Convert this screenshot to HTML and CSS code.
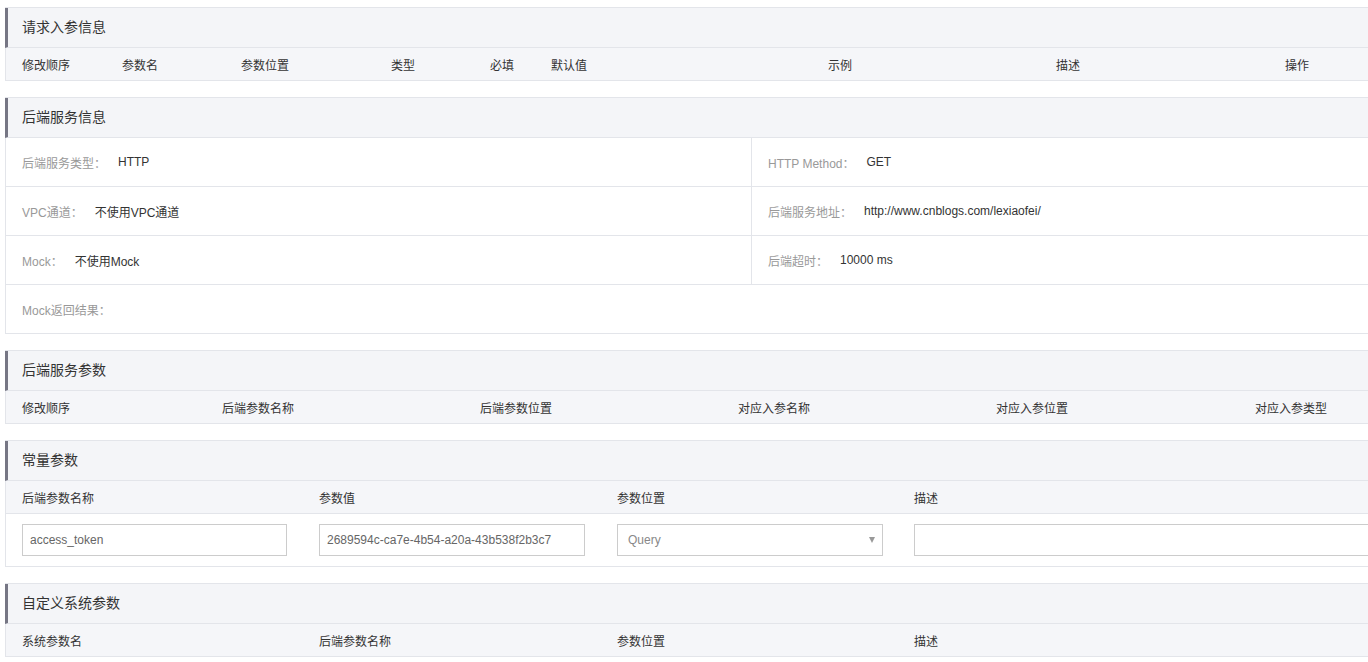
FILE: index.html
```html
<!DOCTYPE html>
<html lang="zh-CN">
<head>
<meta charset="utf-8">
<title>API 详情</title>
<link rel="stylesheet" href="styles.css">
</head>
<body>
<div class="page">
  <section class="panel">
    <div class="panel-head">请求入参信息</div>
    <div class="cols cols-req">
      <span>修改顺序</span><span>参数名</span><span>参数位置</span><span>类型</span><span>必填</span><span>默认值</span><span>示例</span><span>描述</span><span>操作</span>
    </div>
  </section>

  <section class="panel">
    <div class="panel-head">后端服务信息</div>
    <div class="info">
      <div class="info-cell"><span class="label">后端服务类型：</span><span class="value">HTTP</span></div>
      <div class="info-cell"><span class="label">HTTP Method：</span><span class="value">GET</span></div>
      <div class="info-cell"><span class="label">VPC通道：</span><span class="value">不使用VPC通道</span></div>
      <div class="info-cell"><span class="label">后端服务地址：</span><span class="value">http://www.cnblogs.com/lexiaofei/</span></div>
      <div class="info-cell"><span class="label">Mock：</span><span class="value">不使用Mock</span></div>
      <div class="info-cell"><span class="label">后端超时：</span><span class="value">10000 ms</span></div>
      <div class="info-cell wide"><span class="label">Mock返回结果：</span></div>
    </div>
  </section>

  <section class="panel">
    <div class="panel-head">后端服务参数</div>
    <div class="cols cols-back">
      <span>修改顺序</span><span>后端参数名称</span><span>后端参数位置</span><span>对应入参名称</span><span>对应入参位置</span><span>对应入参类型</span>
    </div>
  </section>

  <section class="panel">
    <div class="panel-head">常量参数</div>
    <div class="cols cols-four">
      <span>后端参数名称</span><span>参数值</span><span>参数位置</span><span>描述</span><span></span>
    </div>
    <div class="form-row cols-four">
      <div class="fcell"><input class="field" type="text" value="access_token"></div>
      <div class="fcell"><input class="field" type="text" value="2689594c-ca7e-4b54-a20a-43b538f2b3c7"></div>
      <div class="fcell">
        <div class="select"><span class="select-text">Query</span><span class="caret"></span></div>
      </div>
      <div class="fcell wide-input"><input class="field" type="text" value=""></div>
    </div>
  </section>

  <section class="panel">
    <div class="panel-head">自定义系统参数</div>
    <div class="cols cols-four">
      <span>系统参数名</span><span>后端参数名称</span><span>参数位置</span><span>描述</span><span></span>
    </div>
  </section>
</div>
</body>
</html>
```

FILE: styles.css
```css
html, body {
  margin: 0;
  padding: 0;
  overflow: hidden;
  background: #ffffff;
}

body {
  font-family: "Liberation Sans", "Noto Sans CJK SC", sans-serif;
  font-size: 12px;
  color: #333333;
}

.page {
  padding: 7px 0 0 5px;
  width: 1492px;
}

.panel {
  width: 1490px;
  border: 1px solid #e3e5ea;
  margin-bottom: 16px;
  background: #ffffff;
}

.panel-head {
  height: 39px;
  line-height: 39px;
  margin-left: -1px;
  border-left: 3px solid #767684;
  border-bottom: 1px solid #e3e5ea;
  padding-left: 14px;
  background: #f4f5f8;
  font-size: 14px;
  color: #333333;
}

.cols {
  display: grid;
  height: 32px;
  align-items: center;
  background: #f5f6f9;
  color: #333333;
}

.cols > span {
  padding-left: 16px;
  white-space: nowrap;
}

.cols-req {
  grid-template-columns: 100px 119px 150px 99px 61px 277px 228px 229px 1fr;
}

.cols-back {
  grid-template-columns: 200px 258px 258px 258px 259px 1fr;
}

.cols-four {
  grid-template-columns: 297px 298px 297px 298px 1fr;
}

.form-row {
  display: grid;
  border-top: 1px solid #e3e5ea;
  padding: 10px 0;
  background: #ffffff;
}

.fcell {
  padding: 0 16px;
}

.fcell-select {
  padding-right: 15px;
}

.wide-input {
  grid-column: 4 / 6;
  padding-right: 0;
}

.field {
  box-sizing: border-box;
  display: block;
  width: 100%;
  height: 32px;
  margin: 0;
  padding: 0 7px;
  border: 1px solid #cccccc;
  border-radius: 0;
  font-family: "Liberation Sans", "Noto Sans CJK SC", sans-serif;
  font-size: 12px;
  color: #666666;
  background: #ffffff;
  outline: none;
}

.select {
  box-sizing: border-box;
  height: 32px;
  border: 1px solid #cccccc;
  display: flex;
  align-items: center;
  justify-content: space-between;
  padding: 0 7px 0 10px;
  margin-right: -1px;
  background: #ffffff;
}

.select-text {
  color: #888888;
}

.caret {
  width: 0;
  height: 0;
  border-left: 3px solid transparent;
  border-right: 3px solid transparent;
  border-top: 6px solid #999999;
}

.info {
  display: grid;
  grid-template-columns: 746px 1fr;
}

.info-cell {
  height: 48px;
  display: flex;
  align-items: center;
  padding-left: 16px;
  border-bottom: 1px solid #e3e5ea;
  white-space: nowrap;
}

.info-cell:nth-child(odd) {
  border-right: 1px solid #e3e5ea;
}

.info-cell.wide {
  grid-column: 1 / 3;
  border-right: none;
  border-bottom: none;
}

.label {
  color: #999999;
  margin-right: 12px;
}

.value {
  color: #333333;
}
```
